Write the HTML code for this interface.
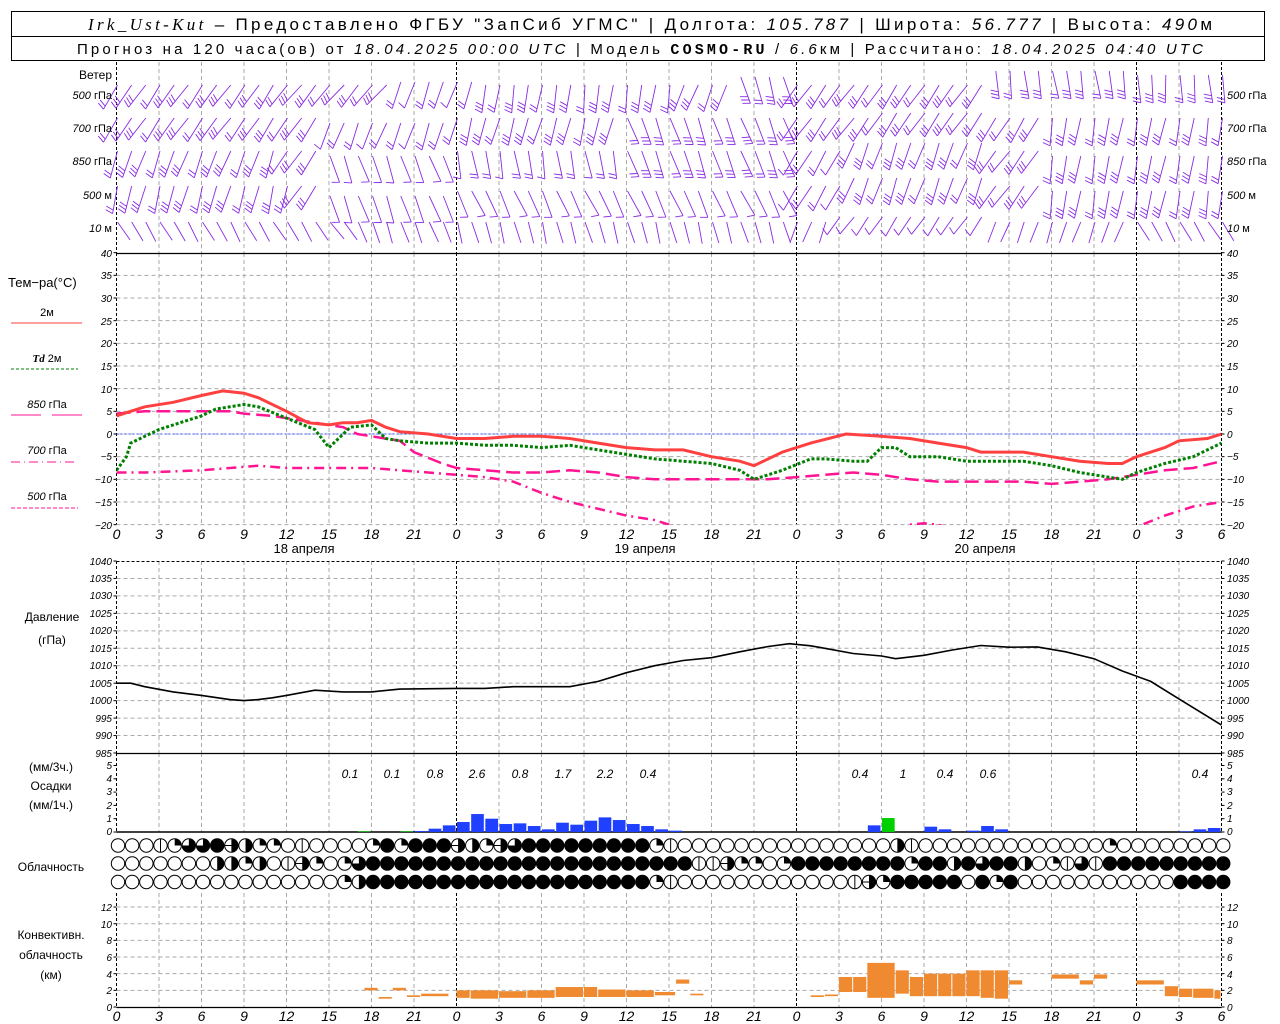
<!DOCTYPE html>
<html><head><meta charset="utf-8">
<style>
html,body{margin:0;padding:0;background:#fff;}
svg{display:block;}
text{font-family:"Liberation Sans",sans-serif;}
.t{font-size:10px;font-style:italic;}
.lab{font-size:12px;}
</style></head>
<body>
<svg id="s" width="1280" height="1024" viewBox="0 0 1280 1024" xmlns="http://www.w3.org/2000/svg">
<rect x="0" y="0" width="1280" height="1024" fill="#fff"/>
<g id="grid"></g>
<g id="gfx"></g>
<!-- header -->
<rect x="11.5" y="11.5" width="1253" height="49" fill="none" stroke="#000" stroke-width="1"/>
<line x1="11" y1="36.5" x2="1265" y2="36.5" stroke="#000"/>
<text x="88" y="30" font-size="17" textLength="1124" lengthAdjust="spacing"><tspan font-style="italic" font-family="Liberation Serif,serif">Irk_Ust-Kut</tspan> – Предоставлено ФГБУ "ЗапСиб УГМС" | Долгота: <tspan font-style="italic">105.787</tspan> | Широта: <tspan font-style="italic">56.777</tspan> | Высота: <tspan font-style="italic">490</tspan>м</text>
<text x="77" y="54" font-size="15" textLength="1126" lengthAdjust="spacing">Прогноз на 120 часа(ов) от <tspan font-style="italic">18.04.2025 00:00 UTC</tspan>  | Модель <tspan font-weight="bold" font-family="Liberation Mono,monospace">COSMO-RU</tspan> / <tspan font-style="italic">6.6</tspan>км | Рассчитано: <tspan font-style="italic">18.04.2025 04:40 UTC</tspan></text>

<!-- wind labels -->
<g font-size="11" text-anchor="end">
<text x="112" y="79" font-size="12">Ветер</text>
<text x="112" y="99"><tspan font-style="italic">500</tspan> гПа</text>
<text x="112" y="132"><tspan font-style="italic">700</tspan> гПа</text>
<text x="112" y="165"><tspan font-style="italic">850</tspan> гПа</text>
<text x="112" y="199"><tspan font-style="italic">500</tspan>  м</text>
<text x="112" y="232"><tspan font-style="italic">10</tspan>   м</text>
</g>
<g font-size="11">
<text x="1227" y="99"><tspan font-style="italic">500</tspan> гПа</text>
<text x="1227" y="132"><tspan font-style="italic">700</tspan> гПа</text>
<text x="1227" y="165"><tspan font-style="italic">850</tspan> гПа</text>
<text x="1227" y="199"><tspan font-style="italic">500</tspan>  м</text>
<text x="1227" y="232"><tspan font-style="italic">10</tspan>   м</text>
</g>

<!-- temperature legend -->
<text x="8" y="287" font-size="13">Тем−ра(°C)</text>
<text x="47" y="316" font-size="11" text-anchor="middle">2м</text>
<line x1="11" y1="323" x2="82" y2="323" stroke="#ff4040"/>
<text x="47" y="362" font-size="11" text-anchor="middle"><tspan font-style="italic" font-weight="bold" font-family="Liberation Serif,serif">Td</tspan>  2м</text>
<line x1="11" y1="369" x2="78" y2="369" stroke="#008000" stroke-dasharray="3,2"/>
<text x="47" y="408" font-size="11" text-anchor="middle"><tspan font-style="italic">850</tspan>  гПа</text>
<line x1="11" y1="415" x2="41" y2="415" stroke="#ff1493"/><line x1="52" y1="415" x2="82" y2="415" stroke="#ff1493"/>
<text x="47" y="454" font-size="11" text-anchor="middle"><tspan font-style="italic">700</tspan>  гПа</text>
<line x1="11" y1="462" x2="78" y2="462" stroke="#ff1493" stroke-dasharray="9,4,1,4"/>
<text x="47" y="500" font-size="11" text-anchor="middle"><tspan font-style="italic">500</tspan>  гПа</text>
<line x1="11" y1="508" x2="78" y2="508" stroke="#ff1493" stroke-dasharray="4,2"/>

<!-- temp ticks -->
<g class="t" text-anchor="end">
<text x="112" y="257">40</text><text x="112" y="279">35</text><text x="112" y="302">30</text><text x="112" y="325">25</text><text x="112" y="347">20</text><text x="112" y="370">15</text><text x="112" y="393">10</text><text x="112" y="415">5</text><text x="112" y="438">0</text><text x="112" y="460">−5</text><text x="112" y="483">−10</text><text x="112" y="506">−15</text><text x="112" y="529">−20</text>
</g>
<g class="t">
<text x="1227" y="257">40</text><text x="1227" y="279">35</text><text x="1227" y="302">30</text><text x="1227" y="325">25</text><text x="1227" y="347">20</text><text x="1227" y="370">15</text><text x="1227" y="393">10</text><text x="1227" y="415">5</text><text x="1227" y="438">0</text><text x="1227" y="460">−5</text><text x="1227" y="483">−10</text><text x="1227" y="506">−15</text><text x="1227" y="529">−20</text>
</g>
<!-- time labels mid -->
<g font-size="14" font-style="italic" text-anchor="middle">
<text x="116.5" y="539">0</text><text x="159" y="539">3</text><text x="201.5" y="539">6</text><text x="244" y="539">9</text><text x="286.5" y="539">12</text><text x="329" y="539">15</text><text x="371.5" y="539">18</text><text x="414" y="539">21</text><text x="456.5" y="539">0</text><text x="499" y="539">3</text><text x="541.5" y="539">6</text><text x="584" y="539">9</text><text x="626.5" y="539">12</text><text x="669" y="539">15</text><text x="711.5" y="539">18</text><text x="754" y="539">21</text><text x="796.5" y="539">0</text><text x="839" y="539">3</text><text x="881.5" y="539">6</text><text x="924" y="539">9</text><text x="966.5" y="539">12</text><text x="1009" y="539">15</text><text x="1051.5" y="539">18</text><text x="1094" y="539">21</text><text x="1136.5" y="539">0</text><text x="1179" y="539">3</text><text x="1221.5" y="539">6</text>
</g>
<g font-size="13" text-anchor="middle">
<text x="304" y="553">18  апреля</text><text x="645" y="553">19  апреля</text><text x="985" y="553">20  апреля</text>
</g>

<!-- pressure -->
<text x="52" y="621" font-size="12" text-anchor="middle">Давление</text>
<text x="52" y="644" font-size="12" text-anchor="middle">(гПа)</text>
<g class="t" font-size="9" text-anchor="end">
<text x="112" y="565">1040</text><text x="112" y="582">1035</text><text x="112" y="599">1030</text><text x="112" y="617">1025</text><text x="112" y="634">1020</text><text x="112" y="652">1015</text><text x="112" y="669">1010</text><text x="112" y="687">1005</text><text x="112" y="704">1000</text><text x="112" y="722">995</text><text x="112" y="739">990</text><text x="112" y="757">985</text>
</g>
<g class="t" font-size="9">
<text x="1227" y="565">1040</text><text x="1227" y="582">1035</text><text x="1227" y="599">1030</text><text x="1227" y="617">1025</text><text x="1227" y="634">1020</text><text x="1227" y="652">1015</text><text x="1227" y="669">1010</text><text x="1227" y="687">1005</text><text x="1227" y="704">1000</text><text x="1227" y="722">995</text><text x="1227" y="739">990</text><text x="1227" y="757">985</text>
</g>

<!-- precip -->
<g font-size="12" text-anchor="middle">
<text x="51" y="771">(мм/3ч.)</text><text x="51" y="790">Осадки</text><text x="51" y="809">(мм/1ч.)</text>
<text x="51" y="871">Облачность</text>
<text x="51" y="939">Конвективн.</text><text x="51" y="959">облачность</text><text x="51" y="979">(км)</text>
</g>
<g class="t" font-size="9" text-anchor="end">
<text x="112" y="769">5</text><text x="112" y="782">4</text><text x="112" y="795">3</text><text x="112" y="809">2</text><text x="112" y="822">1</text><text x="112" y="835">0</text>
</g>
<g class="t" font-size="9">
<text x="1227" y="769">5</text><text x="1227" y="782">4</text><text x="1227" y="795">3</text><text x="1227" y="809">2</text><text x="1227" y="822">1</text><text x="1227" y="835">0</text>
</g>
<g font-size="12" font-style="italic" text-anchor="middle">
<text x="350" y="778">0.1</text><text x="392" y="778">0.1</text><text x="435" y="778">0.8</text><text x="477" y="778">2.6</text><text x="520" y="778">0.8</text><text x="563" y="778">1.7</text><text x="605" y="778">2.2</text><text x="648" y="778">0.4</text><text x="860" y="778">0.4</text><text x="903" y="778">1</text><text x="945" y="778">0.4</text><text x="988" y="778">0.6</text><text x="1200" y="778">0.4</text>
</g>

<!-- convective ticks -->
<g class="t" font-size="9" text-anchor="end">
<text x="112" y="911">12</text><text x="112" y="928">10</text><text x="112" y="944">8</text><text x="112" y="961">6</text><text x="112" y="978">4</text><text x="112" y="994">2</text><text x="112" y="1011">0</text>
</g>
<g class="t" font-size="9">
<text x="1227" y="911">12</text><text x="1227" y="928">10</text><text x="1227" y="944">8</text><text x="1227" y="961">6</text><text x="1227" y="978">4</text><text x="1227" y="994">2</text><text x="1227" y="1011">0</text>
</g>
<g font-size="14" font-style="italic" text-anchor="middle">
<text x="116.5" y="1021">0</text><text x="159" y="1021">3</text><text x="201.5" y="1021">6</text><text x="244" y="1021">9</text><text x="286.5" y="1021">12</text><text x="329" y="1021">15</text><text x="371.5" y="1021">18</text><text x="414" y="1021">21</text><text x="456.5" y="1021">0</text><text x="499" y="1021">3</text><text x="541.5" y="1021">6</text><text x="584" y="1021">9</text><text x="626.5" y="1021">12</text><text x="669" y="1021">15</text><text x="711.5" y="1021">18</text><text x="754" y="1021">21</text><text x="796.5" y="1021">0</text><text x="839" y="1021">3</text><text x="881.5" y="1021">6</text><text x="924" y="1021">9</text><text x="966.5" y="1021">12</text><text x="1009" y="1021">15</text><text x="1051.5" y="1021">18</text><text x="1094" y="1021">21</text><text x="1136.5" y="1021">0</text><text x="1179" y="1021">3</text><text x="1221.5" y="1021">6</text>
</g>
</svg>
<script>
(function(){
var NS="http://www.w3.org/2000/svg";
var G=document.getElementById("gfx"), GR=document.getElementById("grid");
function el(p,n,a){var e=document.createElementNS(NS,n);for(var k in a)e.setAttribute(k,a[k]);p.appendChild(e);return e;}
var X0=116.5,PX=14.1667,XE=1221.5;
function X(h){return X0+h*PX;}
function line(p,x1,y1,x2,y2,st,w,da){var a={x1:x1,y1:y1,x2:x2,y2:y2,stroke:st,"stroke-width":w||1};if(da)a["stroke-dasharray"]=da;return el(p,"line",a);}
var panels=[[62,253,0],[253,525,1],[561,753,1],[753,832,1],[893,1007,1]];
panels.forEach(function(pn){
 for(var k=0;k<=26;k++){var x=X(k*3);
  var day=(k%8==0)||k==26;
  line(GR,x,pn[0],x,pn[1],day?"#000":"#aaa",1,day?"3,2":"4,3");}
});
function hgrid(y){line(GR,X0,y,XE,y,"#aaa",1,"4,3");}
for(var v=35;v>=-20;v-=5)hgrid(434-4.533*v);
for(var p=1035;p>985;p-=5)hgrid(561+(1040-p)*3.491);
for(var c=2;c<=12;c+=2)hgrid(1007-8.33*c);
line(GR,X0,253.5,XE,253.5,"#000",1.2);
line(GR,X0,561.5,XE,561.5,"#000",1,"3,2");
line(GR,X0,753.5,XE,753.5,"#000",1.2);
line(GR,X0,832,XE,832,"#000",1.5);
line(GR,X0,1007.5,XE,1007.5,"#000",1.2);
line(GR,X0,434,XE,434,"#3050ff",1,"2,2");
function ticks(ys){ys.forEach(function(y){line(GR,X0-3,y,X0,y,"#000");line(GR,XE,y,XE+3,y,"#000");});}
var ty=[];for(v=40;v>=-20;v-=5)ty.push(434-4.533*v);ticks(ty);
ty=[];for(p=1040;p>=985;p-=5)ty.push(561+(1040-p)*3.491);ticks(ty);
ty=[];for(v=0;v<=5;v++)ty.push(832-13.3*v);ticks(ty);
ty=[];for(c=0;c<=12;c+=2)ty.push(1007-8.33*c);ticks(ty);
function curve(pts,fy,st,w,da,clip){var s="";pts.forEach(function(q){s+=X(q[0]).toFixed(1)+","+fy(q[1]).toFixed(1)+" ";});
 var a={points:s,fill:"none",stroke:st,"stroke-width":w};if(da)a["stroke-dasharray"]=da;if(clip)a["clip-path"]="url(#ct)";el(G,"polyline",a);}
var defs=el(document.getElementById("s"),"defs",{});var cp=el(defs,"clipPath",{id:"ct"});el(cp,"rect",{x:X0,y:253,width:XE-X0,height:272});
var fT=function(v){return 434-4.533*v;};
curve([[0,-8.5],[2,-8.5],[6,-8],[8,-7.5],[10,-7],[12,-7.5],[14,-7.5],[18,-7.5],[20,-8],[22,-8.5],[24,-9],[26,-9.5],[28,-10.5],[30,-13],[32,-15],[34,-16.5],[36,-18],[38,-19],[40,-21]],fT,"#ff1493",2.5,"10,5,2,5",1);
curve([[55,-21],[56,-20],[57,-19.7],[58,-20],[59,-21]],fT,"#ff1493",2.5,"10,5,2,5",1);
curve([[71,-21],[72,-20.5],[74,-18],[76,-16],[78,-15]],fT,"#ff1493",2.5,"10,5,2,5",1);
curve([[0,4.5],[2,5],[4,5],[6,5],[8,5],[9,4.5],[11,4],[13,3],[14,2.5],[16,1.5],[17,0],[18,-0.5],[20,-1.5],[21,-4],[23,-6.5],[24,-7.5],[26,-8],[28,-8.5],[30,-8.5],[32,-8],[34,-8.5],[36,-9.5],[38,-10],[42,-10],[46,-10],[48,-9.5],[50,-9],[52,-8.5],[54,-9],[56,-10],[58,-10.5],[60,-10.5],[64,-10.5],[66,-11],[68,-10.5],[70,-10],[72,-9],[74,-8],[76,-7.5],[78,-6]],fT,"#ff1493",2.5,"14,6",1);
curve([[0,-8],[0.7,-5],[1,-2],[2,-0.5],[3,1],[5,3],[6,4],[7,5.5],[9,6.5],[10,6],[12,3.5],[14,1],[15,-3],[16,0],[16.5,1.5],[18,2],[19,-1],[20,-1.5],[22,-2],[24,-2],[26,-2.5],[28,-2.5],[30,-3],[32,-2.5],[34,-3.5],[36,-4.5],[38,-5.5],[40,-6],[42,-6.5],[44,-8],[45,-10],[47,-8],[49,-5.5],[50,-5.5],[52,-6],[53,-6],[54,-3],[55,-3],[56,-5],[58,-5],[60,-6],[62,-6],[64,-6],[66,-7],[68,-8.5],[70,-9.5],[71,-10],[72,-8.5],[74,-6.5],[76,-5],[78,-2]],fT,"#008000",3,"3,2",1);
curve([[0,4],[1,5],[2,6],[4,7],[6,8.5],[7.5,9.5],[9,9],[10,8],[12,5],[13.5,2.5],[15,2],[16,2.5],[17,2.5],[18,3],[19,1.5],[20,0.5],[22,0],[24,-1],[26,-1],[28,-0.5],[30,-0.5],[32,-1],[34,-2],[36,-3],[38,-3.5],[40,-3.5],[42,-5],[44,-6],[45,-7],[47,-4],[49,-2],[51.5,0],[54,-0.5],[56,-1],[58,-2],[60,-3],[61,-4],[64,-4],[66,-5],[68,-6],[70,-6.5],[71,-6.5],[72,-5],[74,-3],[75,-1.5],[77,-1],[78,0]],fT,"#ff4040",3,null,1);
curve([[0,1005],[1,1005],[2,1004],[4,1002.5],[6,1001.5],[8,1000.3],[9,1000],[10,1000.3],[11,1000.8],[12,1001.5],[14,1003],[16,1002.5],[18,1002.5],[20,1003.3],[24,1003.5],[26,1003.5],[28,1004],[32,1004],[34,1005.5],[36,1008],[38,1010],[40,1011.5],[42,1012.3],[44,1014],[46,1015.5],[47.5,1016.3],[49,1015.7],[50,1015],[52,1013.5],[54,1012.8],[55,1012],[57,1013],[59,1014.5],[61,1015.8],[63,1015.3],[65,1015.4],[67,1014],[69,1012],[71,1008.5],[73,1005.5],[75,1000.5],[77,995.5],[78,993]],function(p){return 561+(1040-p)*3.491;},"#000",1.6);
var pr=[[17,0.05,"#00c000"],[20,0.05,"#00c000"],[21,0.07],[22,0.25],[23,0.5],[24,0.75],[25,1.35],[26,1.0],[27,0.6],[28,0.65],[29,0.45],[30,0.2],[31,0.7],[32,0.55],[33,0.85],[34,1.1],[35,0.9],[36,0.6],[37,0.45],[38,0.2],[39,0.1],[53,0.5],[54,1.05,"#00d000"],[57,0.4],[58,0.2],[60,0.1],[61,0.45],[62,0.2],[75,0.05],[76,0.2],[77,0.3]];
pr.forEach(function(b){var h=b[1]*13.3;el(G,"rect",{x:X(b[0])+0.5,y:832-h,width:PX-1.5,height:h,fill:b[2]||"#2040ff"});});
var cv=[[17.5,18.5,2.0,2.3],[18.5,19.5,1.0,1.2],[19.5,20.5,2.0,2.3],[20.5,21.5,1.2,1.4],[21.5,23.5,1.3,1.6],[24,25,1.1,2.0],[25,27,1.0,2.0],[27,29,1.1,1.9],[29,31,1.1,2.0],[31,33,1.2,2.4],[33,34,1.2,2.4],[34,36,1.2,2.1],[36,38,1.2,2.0],[38,39.5,1.4,1.8],[39.5,40.5,2.8,3.3],[40.5,41.5,1.4,1.6],[49,50,1.2,1.4],[50,51,1.3,1.5],[51,52,1.8,3.6],[52,53,1.8,3.6],[53,55,1.1,5.3],[55,56,1.6,4.4],[56,57,1.3,3.6],[57,58,1.3,4.0],[58,59,1.3,4.0],[59,60,1.3,4.0],[60,61,1.3,4.4],[61,62,1.1,4.4],[62,63,1.0,4.4],[63,64,2.7,3.2],[66,68,3.4,3.9],[68,69,2.7,3.2],[69,70,3.4,3.9],[72,74,2.7,3.2],[74,75,1.3,2.5],[75,76,1.2,2.2],[76,77.5,1.1,2.2],[77.5,78,1.0,2.0]];
cv.forEach(function(b){el(G,"rect",{x:X(b[0]),y:1007-8.33*b[3],width:(b[1]-b[0])*PX-1,height:8.33*(b[3]-b[2]),fill:"#f08a30"});});
var rows=[
"ooovqtt#ehqqovooooq#q###ehqet#########qvooooooooooooooohvoooooooooooooqooooooooo",
"ooooooohhqhoveqoqt#######################vveqqoq########q##h#t##hoqvtv#########",
"ooooooooooooooooqh####################qvooooooooooooveq#####o#q#ooooooooooo####"];
var ry=[845.5,863.5,882];
rows.forEach(function(r,ri){for(var h=0;h<=78;h++){var t=r[h]||"o";var cx=118+h*14.17,cy=ry[ri],R=6.7;
 if(t=="#"){el(G,"circle",{cx:cx,cy:cy,r:R,fill:"#000",stroke:"#000"});continue;}
 el(G,"circle",{cx:cx,cy:cy,r:R,fill:"#fff",stroke:"#000","stroke-width":1});
 if(t=="h")el(G,"path",{d:"M"+cx+","+(cy-R)+" A"+R+","+R+" 0 0 1 "+cx+","+(cy+R)+"Z",fill:"#000"});
 if(t=="q")el(G,"path",{d:"M"+cx+","+cy+" L"+cx+","+(cy-R)+" A"+R+","+R+" 0 0 1 "+(cx+R)+","+cy+"Z",fill:"#000"});
 if(t=="t")el(G,"path",{d:"M"+cx+","+cy+" L"+cx+","+(cy-R)+" A"+R+","+R+" 0 1 1 "+(cx-R)+","+cy+"Z",fill:"#000"});
 if(t=="v")line(G,cx,cy-R,cx,cy+R,"#000",1);
 if(t=="e"){el(G,"path",{d:"M"+cx+","+(cy-R)+" A"+R+","+R+" 0 0 1 "+cx+","+(cy+R)+"Z",fill:"#000"});line(G,cx-R,cy,cx+R,cy,"#000",1);}
}});
var W=[
 [85,[[0,215,0,3],[12,220,0,3],[20,200,-3,2],[26,188,0,4],[40,200,0,4],[44,165,-8,3],[48,215,0,4],[60,215,0,3],[62,172,-14,6],[72,176,-10,5]],28],
 [118,[[0,215,0,3],[15,200,5,2],[24,195,0,3],[36,160,0,3],[48,215,0,3],[54,215,-5,4],[62,210,0,3],[66,190,0,3]],28],
 [151,[[0,200,0,3],[12,215,0,3],[15,160,5,1],[24,170,0,2],[36,160,0,3],[48,210,0,2],[52,200,-8,3],[62,215,0,3],[66,190,5,4]],28],
 [186,[[0,195,0,3],[13,215,0,3],[15,160,10,1],[24,155,5,1],[48,210,0,2],[52,200,-8,3],[62,215,0,3],[66,190,5,4]],28],
 [222,[[0,150,0,0],[15,140,0,0],[17,160,0,0],[24,165,0,0],[48,200,0,0],[51,215,-5,1],[62,200,0,0],[72,150,0,0]],22]
];
W.forEach(function(w){var segs=w[1];for(var h=0;h<=78;h++){var s=segs[0];segs.forEach(function(q){if(h>=q[0])s=q;});
 var a=(s[1]+((h*37)%11-5))*Math.PI/180;var bx=X(h)+1,by=w[0]+s[2];var L=w[2];
 var ux=Math.sin(a),uy=-Math.cos(a);var tx=bx+ux*L,ty=by+uy*L;
 var pth="M"+bx.toFixed(1)+","+by.toFixed(1)+"L"+tx.toFixed(1)+","+ty.toFixed(1);
 var px=-uy,py=ux;var nf=Math.min(s[3],3)-((h%3==0)?1:0);if(s[3]>0&&nf<1)nf=1;
 for(var f=0;f<nf;f++){var fx=tx-ux*f*3.5,fy=ty-uy*f*3.5;var ex=fx+(px*0.94-ux*0.34)*8,ey=fy+(py*0.94-uy*0.34)*8;
  pth+="M"+fx.toFixed(1)+","+fy.toFixed(1)+"L"+ex.toFixed(1)+","+ey.toFixed(1);}
 el(G,"path",{d:pth,stroke:"#8a2be2","stroke-width":0.9,fill:"none"});}});
})();
</script>
</body></html>
